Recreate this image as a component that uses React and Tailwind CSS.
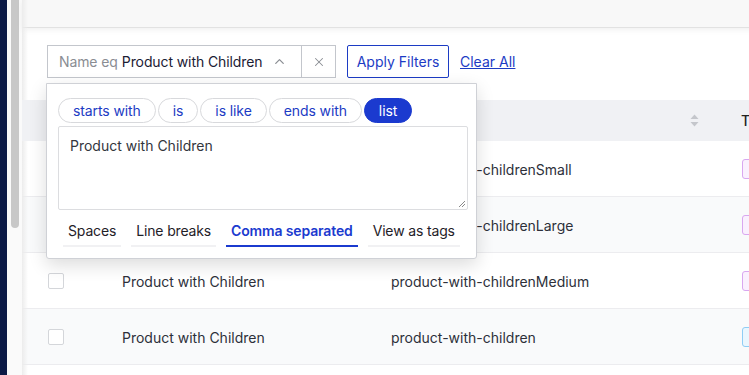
import { ChevronUp, X } from "lucide-react"

const rows = [
  { name: "Product with Children", slug: "product-with-childrenSmall", badge: "purple" },
  { name: "Product with Children", slug: "product-with-childrenLarge", badge: "purple" },
  { name: "Product with Children", slug: "product-with-childrenMedium", badge: "purple" },
  { name: "Product with Children", slug: "product-with-children", badge: "blue" },
]

const pills = ["starts with", "is", "is like", "ends with", "list"]
const tabs = ["Spaces", "Line breaks", "Comma separated", "View as tags"]

const App = () => {
  return (
    <div className="w-[749px] h-[375px] flex overflow-hidden bg-white font-['Inter',sans-serif] text-[14px]">
      {/* sidebar edge + scrollbar */}
      <div className="w-[7px] shrink-0 bg-[#0c1a46]" />
      <div className="w-[15px] shrink-0 bg-[#fafafa] pl-[4px]">
        <div className="w-[8px] h-[228px] bg-[#c8c8c8] rounded-b-[4px]" />
      </div>

      <div className="relative flex-1 bg-white">
        <div className="absolute left-0 top-0 bottom-0 w-[6px] bg-gradient-to-r from-[#ececec] to-transparent" />
        {/* header */}
        <div className="h-[28px] bg-[#f8f8f8] border-b border-[#e2e2e2] shadow-[0_2px_6px_rgba(0,0,0,0.06)]" />

        {/* filter bar */}
        <div className="flex items-center mt-[17px] pl-[25px] h-[33px]">
          <div className="flex h-[33px] w-[289px] border border-[#c3c6cc] bg-white">
            <div className="flex-1 flex items-center pl-[11px] whitespace-nowrap tracking-[-0.1px]">
              <span className="text-[#8a8d93]">Name eq</span>
              <span className="ml-[4px] text-[#1b2034]">Product with Children</span>
              <ChevronUp className="ml-[10px] w-[15px] h-[15px] text-[#8a8d93]" strokeWidth={2} />
            </div>
            <div className="w-[34px] border-l border-[#c3c6cc] flex items-center justify-center">
              <X className="w-[14px] h-[14px] text-[#8a8d93]" strokeWidth={1.75} />
            </div>
          </div>
          <button className="ml-[11px] h-[33px] w-[102px] border-[1.5px] border-[#1c3bc4] rounded-[2px] text-[#1c3bc4] bg-white">
            Apply Filters
          </button>
          <span className="ml-[11px] text-[#1c3bc4] underline">Clear All</span>
        </div>

        {/* table */}
        <div className="mt-[22px]">
          <div className="h-[41px] bg-[#f0f1f4] relative">
            <svg className="absolute left-[668px] top-[14px]" width="9" height="13" viewBox="0 0 9 13">
              <path d="M4.5 0.5 L8.5 5 H0.5 Z" fill="#c4c6cb" />
              <path d="M4.5 12.5 L8.5 8 H0.5 Z" fill="#c4c6cb" />
            </svg>
            <span className="absolute left-[719px] top-[10px] text-[#222] font-medium">T</span>
          </div>
          {rows.map((r, i) => (
            <div
              key={i}
              className={`h-[56px] flex items-center border-b border-[#ececef] ${i % 2 ? "bg-[#f9fafb]" : "bg-white"}`}
            >
              <div className="w-[16px] h-[16px] ml-[26px] border border-[#d4d6da] rounded-[2px] bg-white shrink-0" />
              <span className="ml-[58px] w-[269px] text-[#2d303a] whitespace-nowrap pt-[2px]">{r.name}</span>
              <span className="w-[351px] text-[#2d303a] whitespace-nowrap pt-[2px]">{r.slug}</span>
              <div
                className={`w-[30px] h-[20px] rounded-[3px] border ${
                  r.badge === "blue" ? "border-[#8fcdf5] bg-[#eaf6fe]" : "border-[#d9a7f0] bg-[#faf0fe]"
                }`}
              />
            </div>
          ))}
        </div>

        {/* popover */}
        <div className="absolute left-[24px] top-[83px] w-[431px] h-[176px] bg-white border border-[#cfd1d6] rounded-b-[3px] shadow-[0_6px_18px_rgba(0,0,0,0.14)] px-[11px] pt-[14px]">
          <div className="flex gap-[2px]">
            {pills.map((p) => (
              <span
                key={p}
                className={`h-[25px] px-[14px] flex items-center rounded-full border tracking-[-0.1px] ${
                  p === "list" ? "bg-[#1b3acf] border-[#1b3acf] text-white" : "border-[#d8d9dc] text-[#1c3bc4] bg-white"
                }`}
              >
                {p}
              </span>
            ))}
          </div>
          <div className="relative mt-[3px] h-[84px] w-[410px] border border-[#dcdde0] rounded-[2px] px-[11px] pt-[8px] text-[#33363d]">
            Product with Children
            <svg className="absolute right-[1px] bottom-[1px]" width="8" height="8" viewBox="0 0 8 8">
              <path d="M7 1 L1 7 M7 4 L4 7" stroke="#8a8a8a" strokeWidth="1" />
            </svg>
          </div>
          <div className="flex gap-[10px] mt-[5px] ml-[5px]">
            {tabs.map((t) => {
              const active = t === "Comma separated"
              return (
                <div
                  key={t}
                  className={`h-[32px] px-[5px] flex items-center whitespace-nowrap border-b-2 tracking-[-0.15px] ${
                    active ? "border-[#1b3acf] text-[#1b3acf] font-semibold" : "border-[#f1f1f3] text-[#1f2128]"
                  }`}
                >
                  {t}
                </div>
              )
            })}
          </div>
        </div>
      </div>
    </div>
  )
}

export default App
